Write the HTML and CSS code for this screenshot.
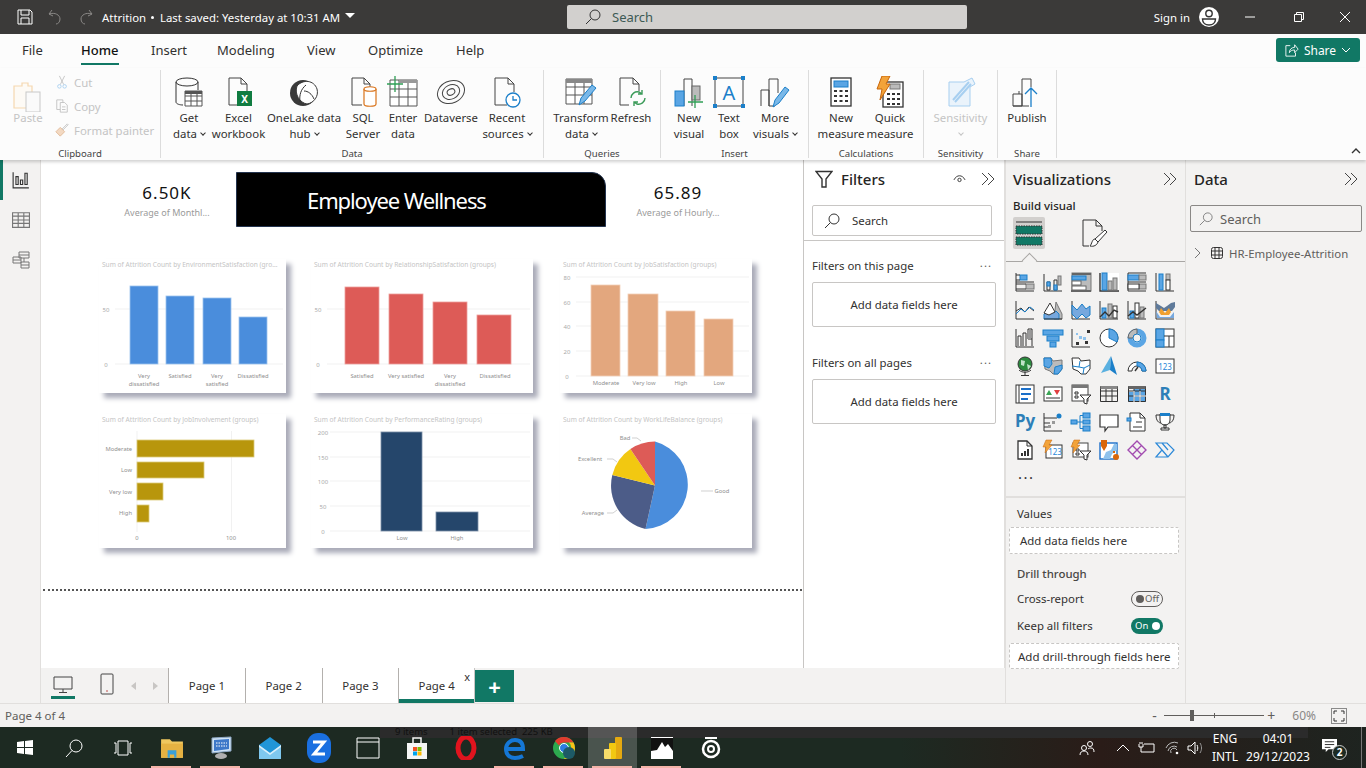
FILE: index.html
```html
<!DOCTYPE html>
<html lang="en">

<head>
    <meta charset="UTF-8">
    <title>Attrition - Power BI Desktop</title>
    <link rel="stylesheet" href="styles.css">
</head>

<body>
    <!-- title bar -->
    <div class="titlebar">
        <svg class="tb-save" viewBox="0 0 16 16"><path class="w1" d="M1 1h12l2 2v12H1zM4 1v5h8V1M4 15v-6h8v6"/></svg>
        <svg class="tb-undo" viewBox="0 0 16 16"><path class="d1" d="M5 1L2 5l4 2M2 5c6-2 11 1 11 5 0 3-2 5-4 5"/></svg>
        <svg class="tb-redo" viewBox="0 0 16 16"><path class="d1" d="M11 1l3 4-4 2M14 5C8 3 3 6 3 10c0 3 2 5 4 5"/></svg>
        <span class="tb-name">Attrition</span>
        <span class="tb-dot"></span>
        <span class="tb-saved">Last saved: Yesterday at 10:31 AM</span>
        <span class="tb-caret"></span>
        <div class="tb-search">
            <svg class="ic16" viewBox="0 0 16 16"><circle class="k1" cx="10" cy="6" r="5"/><path class="k1" d="M6.500 9.500L1 15"/></svg>
            <span>Search</span>
        </div>
        <span class="tb-sign">Sign in</span>
        <svg class="tb-user" viewBox="0 0 20 20"><circle cx="10" cy="10" r="10" fill="#fff"/><circle class="k2" cx="10" cy="6.500" r="3.200"/><path class="k2" d="M3.500 12h13c0 4-3 6-6.500 6s-6.500-2-6.500-6z"/></svg>
        <svg class="tb-min" viewBox="0 0 10 10"><path class="w1" d="M0 5h10"/></svg>
        <svg class="tb-max" viewBox="0 0 10 10"><path class="w1" d="M0.500 2.500h7v7h-7zM2.500 2.500v-2h7v7h-2"/></svg>
        <svg class="tb-close" viewBox="0 0 12 12"><path class="w1" d="M1 1l10 10M11 1L1 11"/></svg>
    </div>

    <!-- ribbon tabs -->
    <div class="tabs">
        <span class="tab t-file">File</span>
        <span class="tab t-home">Home</span>
        <span class="tab t-insert">Insert</span>
        <span class="tab t-model">Modeling</span>
        <span class="tab t-view">View</span>
        <span class="tab t-opt">Optimize</span>
        <span class="tab t-help">Help</span>
        <div class="share">
            <svg class="ic14" viewBox="0 0 16 16"><path class="w1" d="M6 3H1v12h11v-4M5 11c0-4 3-6 6-6V2l4 5-4 4V8c-3 0-5 1-6 3z"/></svg>
            <span>Share</span>
            <svg class="ic10" viewBox="0 0 10 10"><path class="w1" d="M1 3l4 4 4-4"/></svg>
        </div>
    </div>

    <!-- ribbon -->
    <div class="ribbon">
        <div class="group g-clip">
            <div class="clip-row">
                <div class="paste">
                    <svg class="ic32" viewBox="0 0 32 32"><path class="or" d="M2 6h8V3h6v3h4v22H2z"/><rect x="14" y="12" width="14" height="20" fill="#fafafa" stroke="#c8c8c8"/></svg>
                    <span>Paste</span>
                </div>
                <div class="clip-list">
                    <div class="clip-item">
                        <svg class="ic14" viewBox="0 0 14 16"><path class="dg" d="M4 1l5 10M10 1L5 11"/><circle class="bl" cx="4" cy="13" r="2"/><circle class="bl" cx="10" cy="13" r="2"/></svg>
                        <span>Cut</span>
                    </div>
                    <div class="clip-item">
                        <svg class="ic14" viewBox="0 0 14 16"><path class="dg" d="M1 1h7v3M1 1v11h4M5 4h5l3 3v8H5zM7 9h4M7 12h4"/></svg>
                        <span>Copy</span>
                    </div>
                    <div class="clip-item">
                        <svg class="ic14" viewBox="0 0 16 16"><path d="M1 10l5-5 5 5-5 5z" fill="#f3d9c2" stroke="#e0b896"/><path class="dg" d="M8 7l6-6 1 1-6 6"/></svg>
                        <span>Format painter</span>
                    </div>
                </div>
            </div>
            <div class="group-label">Clipboard</div>
        </div>

        <div class="group g-data">
            <div class="btns">
                <div class="btn w44">
                    <svg class="ic32" viewBox="0 0 32 32"><path class="k1" d="M3 6v20c0 2 4 3 7 3M25 6v8"/><ellipse class="k1" cx="14" cy="6" rx="11" ry="4"/><path class="tb" d="M12 15h17v15H12zM12 20h17M12 25h17M18 15v15M24 15v15"/><rect x="12" y="15" width="17" height="3" fill="#555"/></svg>
                    <span>Get<br>data <i class="chev"></i></span>
                </div>
                <div class="btn w55">
                    <svg class="ic32" viewBox="0 0 32 32"><path class="dk" d="M6 2h12l6 6v16M6 2v27h8M18 2v6h6"/><rect x="14" y="15" width="15" height="15" fill="#107c41"/><text class="xl" x="21.500" y="27">X</text></svg>
                    <span>Excel<br>workbook</span>
                </div>
                <div class="btn w76">
                    <svg class="ic32" viewBox="0 0 32 32"><circle cx="15" cy="17" r="13" fill="#3a3a3a"/><path d="M9 10c6-7 17-6 20 3 2 7-3 14-10 15-7-1-13-10-10-18z" fill="#fff" stroke="#3a3a3a"/><path class="k1" d="M12 26c-1-7 1-13 6-17M16 15c4 0 8 3 10 8"/></svg>
                    <span>OneLake data<br>hub <i class="chev"></i></span>
                </div>
                <div class="btn w42">
                    <svg class="ic32" viewBox="0 0 32 32"><path class="dk" d="M5 2h12l6 6v4M5 2v27h10M17 2v6h6"/><path class="orl" d="M17 13c0-3 12-3 12 0v15c0 3-12 3-12 0z"/><path class="orl" d="M17 13c0 3 12 3 12 0"/></svg>
                    <span>SQL<br>Server</span>
                </div>
                <div class="btn w38">
                    <svg class="ic32" viewBox="0 0 32 32"><path class="tb" d="M3 4h27v26H3zM3 13h27M3 21h27M12 4v26M21 4v26"/><rect x="12" y="4" width="18" height="3" fill="#999"/><path class="gr" d="M8 0v16M0 8h16"/></svg>
                    <span>Enter<br>data</span>
                </div>
                <div class="btn w58">
                    <svg class="ic32" viewBox="0 0 32 32"><ellipse class="dk" cx="16" cy="16" rx="14" ry="11" transform="rotate(-25 16 16)"/><ellipse class="dk" cx="16" cy="16" rx="9" ry="7" transform="rotate(-25 16 16)"/><ellipse class="dk" cx="16" cy="16" rx="4" ry="3" transform="rotate(-25 16 16)"/></svg>
                    <span>Dataverse</span>
                </div>
                <div class="btn w54">
                    <svg class="ic32" viewBox="0 0 32 32"><path class="dk" d="M4 2h13l6 6v8M4 2v27h12M17 2v6h6"/><circle cx="22" cy="24" r="7" fill="#fff" stroke="#1b7fc9" stroke-width="1.300"/><path class="blu" d="M22 20v4h4"/></svg>
                    <span>Recent<br>sources <i class="chev"></i></span>
                </div>
            </div>
            <div class="group-label">Data</div>
        </div>

        <div class="group g-query">
            <div class="btns">
                <div class="btn w54">
                    <svg class="ic32" viewBox="0 0 32 32"><path class="tb" d="M1 3h26v25H1zM1 11h26M1 19h26M10 3v25M19 3v25"/><rect x="1" y="3" width="26" height="4" fill="#888"/><path d="M14 29l2-7L27 9l4 3-11 13z" fill="#7ab8e8" stroke="#1b7fc9"/></svg>
                    <span>Transform<br>data <i class="chev"></i></span>
                </div>
                <div class="btn w46">
                    <svg class="ic32" viewBox="0 0 32 32"><path class="dk" d="M5 2h13l6 6v7M5 2v27h9M18 2v6h6"/><path class="grn" d="M16 22c0-4 4-7 8-6l3 2M30 22c0 4-4 7-8 6l-3-2M27 14v4h-4M19 30v-4h4"/></svg>
                    <span>Refresh</span>
                </div>
            </div>
            <div class="group-label">Queries</div>
        </div>

        <div class="group g-insert">
            <div class="btns">
                <div class="btn w40">
                    <svg class="ic32" viewBox="0 0 32 32"><path class="dk" d="M11 30V3h8v27"/><rect x="2" y="15" width="9" height="15" fill="#5aa5e4" stroke="#1b7fc9"/><rect x="19" y="10" width="8" height="14" fill="#bbb" stroke="#666"/><path class="gr" d="M22 19v14M15 26h15"/></svg>
                    <span>New<br>visual</span>
                </div>
                <div class="btn w40">
                    <svg class="ic32" viewBox="0 0 32 32"><rect class="dk" x="2" y="2" width="28" height="28"/><g class="hnd"><rect x="0" y="0" width="4" height="4"/><rect x="28" y="0" width="4" height="4"/><rect x="0" y="28" width="4" height="4"/><rect x="28" y="28" width="4" height="4"/></g><text class="tb-a" x="16" y="24">A</text></svg>
                    <span>Text<br>box</span>
                </div>
                <div class="btn w52">
                    <svg class="ic32" viewBox="0 0 32 32"><path class="dk" d="M2 30V14h8v16M10 30V3h9v14M10 30h6"/><path d="M14 31l2-7L26 11l4 3-10 13z" fill="#7ab8e8" stroke="#1b7fc9"/></svg>
                    <span>More<br>visuals <i class="chev"></i></span>
                </div>
            </div>
            <div class="group-label">Insert</div>
        </div>

        <div class="group g-calc">
            <div class="btns">
                <div class="btn w50">
                    <svg class="ic32" viewBox="0 0 32 32"><rect class="dk2" x="6" y="2" width="20" height="28"/><rect x="9" y="5" width="14" height="6" fill="#5aa5e4" stroke="#1b7fc9"/><path class="dots" d="M9 15h3M14.500 15h3M20 15h3M9 20h3M14.500 20h3M20 20h3M9 25h3M14.500 25h3M20 25h3"/></svg>
                    <span>New<br>measure</span>
                </div>
                <div class="btn w48">
                    <svg class="ic32" viewBox="0 0 32 32"><rect class="dk2" x="9" y="6" width="20" height="25"/><rect x="16" y="8" width="10" height="5" fill="#bbb" stroke="#777"/><path class="dots" d="M13 18h3M18 18h3M23 18h3M13 23h3M18 23h3M23 23h3M13 28h3M18 28h3M23 28h3"/><path d="M8 0h8l-4 8h4L6 24l2-11H3z" fill="#f2a33a" stroke="#c8660a"/></svg>
                    <span>Quick<br>measure</span>
                </div>
            </div>
            <div class="group-label">Calculations</div>
        </div>

        <div class="group g-sens">
            <div class="btns">
                <div class="btn w73 off">
                    <svg class="ic32" viewBox="0 0 32 32"><path d="M4 6h15l8-4 3 6-5 3v19H4z" fill="#eaf3fb" stroke="#a7cff0"/><path d="M8 24L24 6M10 26L26 8" stroke="#a7cff0" stroke-width="2"/></svg>
                    <span>Sensitivity<br><i class="chev"></i></span>
                </div>
            </div>
            <div class="group-label">Sensitivity</div>
        </div>

        <div class="group g-share">
            <div class="btns">
                <div class="btn w58">
                    <svg class="ic32" viewBox="0 0 32 32"><path class="dk" d="M2 30V18h9v12zM11 30V3h9v8M8 18v-3M2 30h16"/><path class="blu" d="M20 31V12M14 18l6-6 6 6"/></svg>
                    <span>Publish</span>
                </div>
            </div>
            <div class="group-label">Share</div>
        </div>
        <svg class="collapse" viewBox="0 0 10 10"><path class="k2" d="M1 7l4-4 4 4"/></svg>
    </div>

    <!-- main area -->
    <div class="main">
        <div class="rail">
            <div class="rail-item active">
                <svg class="ic18" viewBox="0 0 16 16"><path class="k1" d="M1 1v14h14M3.500 12V5h2v7zM7.500 12V8h2v4zM11.500 12V2h2v10z"/></svg>
            </div>
            <div class="rail-item">
                <svg class="ic18" viewBox="0 0 16 16"><path class="gy" d="M0.500 1.500h15v13h-15zM0.500 4.500h15M0.500 8h15M0.500 11h15M5.500 1.500v13M10.500 1.500v13"/></svg>
            </div>
            <div class="rail-item">
                <svg class="ic18" viewBox="0 0 18 18"><path class="gy" d="M7 1h10v6H7zM7 4h10M1 6h8v6H1zM1 9h8M9 11h8v6H9zM9 14h8M12 7v4"/></svg>
            </div>
        </div>

        <div class="center">
            <div class="work">
                <div class="canvas">
                    <div class="kpi-row">
                        <div class="kpi kpi-a">
                            <div class="kpi-num">6.50K</div>
                            <div class="kpi-lbl">Average of Monthl...</div>
                        </div>
                        <div class="banner">Employee Wellness</div>
                        <div class="kpi kpi-b">
                            <div class="kpi-num">65.89</div>
                            <div class="kpi-lbl">Average of Hourly...</div>
                        </div>
                    </div>

                    <div class="chart-grid">
                        <div class="card card-a">
                            <svg class="chart" viewBox="0 0 187 134">
                                <text class="c-title" x="3" y="8">Sum of Attrition Count by EnvironmentSatisfaction (gro...</text>
                                <path class="c-grid" d="M16 50h168M16 105h168"/>
                                <text class="c-ax" x="7" y="53">50</text><text class="c-ax" x="7" y="108">0</text>
                                <g fill="#4a8ddc" stroke="#9cc3ee" stroke-width="0.800">
                                    <rect x="31" y="27" width="28" height="78"/><rect x="67" y="37" width="28" height="68"/><rect x="104" y="39" width="28" height="66"/><rect x="140" y="58" width="28" height="47"/>
                                </g>
                                <text class="c-lb" x="45" y="119">Very</text><text class="c-lb" x="45" y="127">dissatisfied</text>
                                <text class="c-lb" x="81" y="119">Satisfied</text>
                                <text class="c-lb" x="118" y="119">Very</text><text class="c-lb" x="118" y="127">satisfied</text>
                                <text class="c-lb" x="154" y="119">Dissatisfied</text>
                            </svg>
                        </div>
                        <div class="card card-b">
                            <svg class="chart" viewBox="0 0 222 134">
                                <text class="c-title" x="3" y="8">Sum of Attrition Count by RelationshipSatisfaction (groups)</text>
                                <path class="c-grid" d="M16 50h203M16 105h203"/>
                                <text class="c-ax" x="7" y="53">50</text><text class="c-ax" x="7" y="108">0</text>
                                <g fill="#dd5b57" stroke="#ee9e9b" stroke-width="0.800">
                                    <rect x="34" y="28" width="34" height="77"/><rect x="78" y="35" width="34" height="70"/><rect x="122" y="43" width="34" height="62"/><rect x="166" y="56" width="34" height="49"/>
                                </g>
                                <text class="c-lb" x="51" y="119">Satisfied</text>
                                <text class="c-lb" x="95" y="119">Very satisfied</text>
                                <text class="c-lb" x="139" y="119">Very</text><text class="c-lb" x="139" y="127">dissatisfied</text>
                                <text class="c-lb" x="184" y="119">Dissatisfied</text>
                            </svg>
                        </div>
                        <div class="card card-c">
                            <svg class="chart" viewBox="0 0 192 134">
                                <text class="c-title" x="3" y="8">Sum of Attrition Count by JobSatisfaction (groups)</text>
                                <path class="c-grid" d="M16 18h173M16 43h173M16 67h173M16 92h173M16 117h173"/>
                                <text class="c-ax" x="7" y="21">80</text><text class="c-ax" x="7" y="46">60</text><text class="c-ax" x="7" y="70">40</text><text class="c-ax" x="7" y="95">20</text><text class="c-ax" x="7" y="120">0</text>
                                <g fill="#e3a77e" stroke="#f2d0b8" stroke-width="0.800">
                                    <rect x="31" y="26" width="29" height="91"/><rect x="68" y="35" width="30" height="82"/><rect x="106" y="52" width="29" height="65"/><rect x="144" y="60" width="29" height="57"/>
                                </g>
                                <text class="c-lb" x="46" y="126">Moderate</text><text class="c-lb" x="84" y="126">Very low</text><text class="c-lb" x="121" y="126">High</text><text class="c-lb" x="159" y="126">Low</text>
                            </svg>
                        </div>
                        <div class="card card-a">
                            <svg class="chart" viewBox="0 0 187 134">
                                <text class="c-title" x="3" y="8">Sum of Attrition Count by JobInvolvement (groups)</text>
                                <path class="c-grid" d="M38 17v101M132.500 17v101"/>
                                <g fill="#b8960c" stroke="#dccb7a" stroke-width="0.800">
                                    <rect x="38" y="26" width="117" height="17"/><rect x="38" y="48" width="67" height="16"/><rect x="38" y="69" width="26" height="17"/><rect x="38" y="91" width="12" height="17"/>
                                </g>
                                <text class="c-lr" x="33" y="37">Moderate</text><text class="c-lr" x="33" y="58">Low</text><text class="c-lr" x="33" y="80">Very low</text><text class="c-lr" x="33" y="101">High</text>
                                <text class="c-lb" x="38" y="126">0</text><text class="c-lb" x="132" y="126">100</text>
                            </svg>
                        </div>
                        <div class="card card-b">
                            <svg class="chart" viewBox="0 0 222 134">
                                <text class="c-title" x="3" y="8">Sum of Attrition Count by PerformanceRating (groups)</text>
                                <path class="c-grid" d="M19 18h200M19 43h200M19 67h200M19 92h200M19 117h200"/>
                                <text class="c-ax" x="12" y="21">200</text><text class="c-ax" x="12" y="46">150</text><text class="c-ax" x="12" y="70">100</text><text class="c-ax" x="12" y="95">50</text><text class="c-ax" x="12" y="120">0</text>
                                <g fill="#25466b" stroke="#7c90a8" stroke-width="0.800">
                                    <rect x="70" y="18" width="41" height="99"/><rect x="125" y="98" width="42" height="19"/>
                                </g>
                                <text class="c-lb" x="91" y="126">Low</text><text class="c-lb" x="146" y="126">High</text>
                            </svg>
                        </div>
                        <div class="card card-c">
                            <svg class="chart" viewBox="0 0 192 134">
                                <text class="c-title" x="3" y="8">Sum of Attrition Count by WorkLifeBalance (groups)</text>
                                <path fill="#4a8ddc" d="M95 71.500V27.500A44 44.500 0 0 1 85.500 115z"/>
                                <path fill="#4c5c88" d="M95 71.500L85.500 115A44 44.500 0 0 1 52.300 61z"/>
                                <path fill="#f2c811" d="M95 71.500L52.300 61A44 44.500 0 0 1 70.400 35z"/>
                                <path fill="#dd5b57" d="M95 71.500L70.400 35A44 44.500 0 0 1 95 27.500z"/>
                                <path class="c-lead" d="M141 77h12M47 99h6l4-3M47 45h6l4 3M72 24h5l4 3"/>
                                <text class="c-lb" x="162" y="79">Good</text><text class="c-lb" x="33" y="101">Average</text><text class="c-lb" x="30" y="47">Excellent</text><text class="c-lb" x="65" y="26">Bad</text>
                            </svg>
                        </div>
                    </div>
                    <div class="dotline"></div>
                </div>

                <!-- filters pane -->
                <div class="filters">
                    <div class="pane-head">
                        <svg class="f-icon" viewBox="0 0 18 18"><path class="k2" d="M1 1.500h16l-6 7.500v8h-4V9z"/></svg>
                        <span class="pane-title">Filters</span>
                        <svg class="f-eye" viewBox="0 0 14 10"><path class="k1" d="M1 6c3-6 9-6 12 0"/><circle cx="7" cy="6" r="1.800" class="k1"/></svg>
                        <svg class="chevs" viewBox="0 0 14 14"><path class="dk" d="M1 1l6 6-6 6M7 1l6 6-6 6"/></svg>
                    </div>
                    <div class="f-search">
                        <svg class="ic16" viewBox="0 0 16 16"><circle class="k1" cx="10" cy="6" r="5"/><path class="k1" d="M6.500 9.500L1 15"/></svg>
                        <span>Search</span>
                    </div>
                    <div class="f-sec">
                        <div class="f-sec-head"><span>Filters on this page</span><b class="more">...</b></div>
                        <div class="f-box">Add data fields here</div>
                    </div>
                    <div class="f-sec f-sec2">
                        <div class="f-sec-head"><span>Filters on all pages</span><b class="more">...</b></div>
                        <div class="f-box">Add data fields here</div>
                    </div>
                </div>
            </div>

            <!-- page tabs -->
            <div class="pagebar">
                <div class="view-btn on">
                    <svg class="ic20" viewBox="0 0 20 18"><path class="dk" d="M1 1h18v12H1z"/><path class="dk" d="M10 13v3M6 16.500h8"/></svg>
                </div>
                <div class="view-btn">
                    <svg class="ic20" viewBox="0 0 14 22"><rect class="dk" x="1" y="1" width="12" height="20" rx="1"/><path d="M6 18h2" stroke="#c0504d"/></svg>
                </div>
                <div class="arrows"><i class="arr-l"></i><i class="arr-r"></i></div>
                <div class="page-tab">Page 1</div>
                <div class="page-tab">Page 2</div>
                <div class="page-tab">Page 3</div>
                <div class="page-tab current">Page 4<span class="tab-x">x</span></div>
                <div class="page-add">+</div>
            </div>
        </div>

        <!-- visualizations pane -->
        <div class="viz">
            <div class="viz-head">
                <span class="pane-title">Visualizations</span>
                <svg class="chevs" viewBox="0 0 14 14"><path class="dk" d="M1 1l6 6-6 6M7 1l6 6-6 6"/></svg>
            </div>
            <div class="viz-sub">Build visual</div>
            <div class="viz-modes">
                <div class="mode-on">
                    <svg class="ic28" viewBox="0 0 28 28"><path class="k1" d="M1 3h26"/><rect x="1" y="7" width="26" height="8" fill="#117865" stroke="#333" stroke-dasharray="1.500 1"/><rect x="1" y="18" width="26" height="8" fill="#117865" stroke="#333" stroke-dasharray="1.500 1"/></svg>
                </div>
                <svg class="mode-off" viewBox="0 0 26 28"><path class="k1" d="M1 27V1h13l6 6v5M14 1v6h6M1 27h6"/><path d="M8 27c4 1 7-1 8-4l9-10-2-2-10 9c-3 0-3 5-5 7z" fill="#fff" stroke="#333"/><path class="k1" d="M13 20l3 3"/></svg>
            </div>
            <div class="viz-line"><i class="viz-tip"></i></div>

            <div class="viz-grid">
                <svg viewBox="0 0 20 20"><path class="k1" d="M1 1v18h18M1 10h18"/><rect class="b" x="5" y="3" width="7" height="5"/><rect class="g" x="11" y="12" width="8" height="5"/><path class="k1" d="M1 3h4M1 8h4M1 12h10M1 17h10"/></svg>
                <svg viewBox="0 0 20 20"><path class="k1" d="M1 2v17h18M4 18V10h3v8zM11 18V8h3v10z"/><rect class="b" x="4" y="10" width="3" height="4"/><rect class="b" x="11" y="13" width="3" height="5"/><rect class="g" x="15" y="4" width="3" height="9"/></svg>
                <svg viewBox="0 0 20 20"><rect class="g" x="1" y="1" width="19" height="18"/><rect x="1" y="1" width="19" height="2" fill="#666"/><rect class="b" x="1" y="4" width="14" height="4"/><rect fill="#fff" stroke="#666" x="1" y="9" width="9" height="4"/><rect fill="#fff" stroke="#666" x="1" y="14" width="14" height="4"/><rect x="0" y="18" width="20" height="2" fill="#666"/></svg>
                <svg viewBox="0 0 20 20"><rect fill="#fff" x="1" y="1" width="19" height="18"/><path class="k2" d="M1 1v18h19"/><rect class="b" x="3" y="1" width="5" height="17"/><rect class="g" x="9" y="9" width="4" height="9"/><rect class="g" x="14" y="6" width="4" height="12"/></svg>
                <svg viewBox="0 0 20 20"><path class="k1" d="M1 1v18h18M1 10h18M1 1h18"/><rect class="b" x="1" y="3" width="11" height="5"/><rect class="g" x="12" y="12" width="7" height="5"/><rect class="g" x="12" y="3" width="7" height="5"/><rect fill="#fff" stroke="#333" x="1" y="12" width="11" height="5"/></svg>
                <svg viewBox="0 0 20 20"><path class="k1" d="M1 1v18h18"/><rect class="b" x="4" y="2" width="4" height="16"/><rect class="g" x="11" y="2" width="4" height="6"/><rect fill="#fff" stroke="#333" x="11" y="8" width="4" height="10"/></svg>

                <svg viewBox="0 0 20 20"><path class="k1" d="M1 1v18h18"/><path class="k1" d="M1 11l5-3 4 4 4-5 5 4"/><path class="bl2" d="M1 14l5-5 4 3 5-5 4 3"/></svg>
                <svg viewBox="0 0 20 20"><path class="g" d="M13 2l6 12v5h-8z"/><path class="bf" d="M1 19v-5l5-5 4 4 3-2 3 3v5z"/><path class="w0" d="M1 13l6-10 5 9-6 3z"/><path class="k1" d="M1 19h18"/></svg>
                <svg viewBox="0 0 20 20"><path class="k1" d="M1 1v18h18"/><path class="bf" d="M1 5l5 5 5-6 4 5 4-3v9l-4 3-4-4-5 5-5-5z"/></svg>
                <svg viewBox="0 0 20 20"><path class="k1" d="M1 1v18h18"/><rect class="b" x="3" y="8" width="4" height="10"/><rect class="g" x="9" y="4" width="4" height="14"/><rect class="w0" x="14" y="6" width="4" height="12"/><path class="k2" d="M1 17l5-5 4 4 5-6 4 2"/></svg>
                <svg viewBox="0 0 20 20"><path class="k1" d="M1 1v18h18"/><rect class="b" x="3" y="11" width="4" height="7"/><rect class="w0" x="8" y="3" width="4" height="15"/><rect class="g" x="13" y="7" width="4" height="11"/><path class="k2" d="M1 16l5-4 4 3 9-7"/></svg>
                <svg viewBox="0 0 20 20"><path class="k1" d="M1 1v18h18"/><path d="M1 3l5 3 3 2 3-2 4-3 4-1v5l-3 4H4L1 8z" fill="#5f7a9a"/><path d="M6 8l4 5 4-5 2 4-2 3H6L4 12z" fill="#f0a030"/><path d="M1 11l4 6h10l4-5v6H2z" fill="#77a8de"/></svg>

                <svg viewBox="0 0 20 20"><path class="k1" d="M1 1v18h18M3 18V8h3v10M8 18V5h3v13M13 11V1h4v10M13 11h4M17 11v7"/><rect x="13" y="2" width="3" height="9" fill="#999"/></svg>
                <svg viewBox="0 0 20 20"><rect class="b" x="0" y="2" width="20" height="5"/><rect class="b" x="4" y="8" width="12" height="5"/><rect class="b" x="7" y="14" width="6" height="5"/></svg>
                <svg viewBox="0 0 20 20"><path class="k1" d="M1 1v18h18"/><rect x="16" y="2" width="3" height="3" fill="#333"/><rect x="5" y="14" width="3" height="3" fill="#333"/><rect x="14" y="13" width="3" height="3" fill="#333"/><rect x="8" y="8" width="3" height="3" fill="#8fc2ec"/><rect x="12" y="9" width="3" height="3" fill="#8fc2ec"/><rect x="5" y="5" width="2" height="2" fill="#8fc2ec"/></svg>
                <svg viewBox="0 0 20 20"><circle cx="10" cy="10" r="9" fill="#fff" stroke="#333"/><path class="b" d="M10 10V1a9 9 0 0 1 8 13z"/></svg>
                <svg viewBox="0 0 20 20"><circle cx="10" cy="10" r="7" fill="none" stroke="#5aa5e4" stroke-width="5"/><path d="M1 10a9 9 0 0 1 9-9v5a4 4 0 0 0-4 4z" fill="#bbb" stroke="#666"/><circle cx="10" cy="10" r="4" fill="#f3f2f1" stroke="#1b7fc9"/></svg>
                <svg viewBox="0 0 20 20"><rect fill="#fff" stroke="#333" x="1" y="1" width="18" height="18"/><rect class="b" x="1" y="1" width="8" height="11"/><rect class="b" x="1" y="12" width="8" height="7"/><path class="k1" d="M9 8h10M14 8v11"/></svg>

                <svg viewBox="0 0 20 20"><circle cx="10" cy="8" r="7" fill="#2b8a3e" stroke="#333"/><path d="M6 4l4 1-1 5-3-1zM12 8l4 2-3 4z" fill="#bfe3c8"/><path class="k1" d="M4 14c3 3 9 3 12 0M10 16v3M6 19.500h8"/></svg>
                <svg viewBox="0 0 20 20"><path class="g" d="M1 2h7l2 3 9-1v9l-4 5h-5l-3-3-5-2z"/><path class="b" d="M1 2h7l1 6-3 4-5-2zM12 11l7-2v4l-4 5h-4z"/></svg>
                <svg viewBox="0 0 20 20"><path fill="#fff" stroke="#333" d="M1 2h7l2 3 9-1v9l-4 5h-5l-3-3-5-2z"/><path class="bl2" d="M9 5L8 11l-7-1M8 11l5 1 6-3M13 12l-1 6"/></svg>
                <svg viewBox="0 0 20 20"><path d="M12 0L2 17l9-3z" fill="#5ab0e0"/><path d="M12 0l-1 14 7 5z" fill="#1b7fc9"/></svg>
                <svg viewBox="0 0 20 20"><path d="M1 15a9 9 0 0 1 18 0h-4a5 5 0 0 0-10 0z" fill="#fff" stroke="#333"/><path d="M10 6a9 9 0 0 1 9 9h-4a5 5 0 0 0-5-5z" fill="#5aa5e4" stroke="#1b7fc9"/><path class="k2" d="M8 15l3-4"/></svg>
                <svg viewBox="0 0 20 20"><rect fill="#fff" stroke="#333" x="1" y="3" width="18" height="14"/><text class="num" x="10" y="14">123</text></svg>

                <svg viewBox="0 0 20 20"><rect fill="#fff" stroke="#333" x="1" y="1" width="18" height="18"/><path class="k1" d="M4 1v18"/><path d="M6 5h10M6 10h10M6 15h7" stroke="#1b6fc9" stroke-width="2"/></svg>
                <svg viewBox="0 0 20 20"><rect fill="#fff" stroke="#333" x="1" y="3" width="18" height="14"/><path fill="#3aa655" d="M6 6l3 5H3z"/><path fill="#e04040" d="M14 11l3-5h-6z"/><path d="M3 14h14" stroke="#333"/></svg>
                <svg viewBox="0 0 20 20"><rect fill="#fff" stroke="#444" x="1" y="1" width="16" height="16"/><rect x="1" y="1" width="16" height="3" fill="#777"/><path class="k1" d="M4 8h3v2H4zM4 12h3v2H4z"/><path fill="#fff" stroke="#333" d="M9 11h11l-4 4v5l-3-1v-4z"/></svg>
                <svg viewBox="0 0 20 20"><path class="k1" d="M1.500 2.500h17v15h-17zM1.500 7h17M1.500 12h17M7 2.500v15M13 2.500v15"/><rect x="1.500" y="2" width="17" height="3" fill="#888"/></svg>
                <svg viewBox="0 0 20 20"><rect x="1" y="8" width="18" height="10" fill="#5aa5e4"/><rect x="7" y="3" width="12" height="5" fill="#5aa5e4"/><path class="k1" d="M1.500 2.500h17v15h-17zM1.500 7h17M1.500 12h17M7 2.500v15M13 2.500v15"/><rect x="1.500" y="2" width="17" height="3" fill="#666"/><path stroke="#fff" d="M7 7v11M13 7v11M7 12h12"/></svg>
                <svg viewBox="0 0 20 20"><text class="big-r" x="10" y="16">R</text></svg>

                <svg viewBox="0 0 20 20" class="py-wide"><text class="big-py" x="0" y="15">Py</text></svg>
                <svg viewBox="0 0 20 20"><path class="k1" d="M1 1v18h18M1 6h13M1 11h6M1 15h4"/><circle cx="16" cy="4" r="2.500" fill="#1b7fc9"/><rect x="9" y="9" width="3" height="3" fill="#999"/><rect x="5" y="13" width="3" height="3" fill="#999"/></svg>
                <svg viewBox="0 0 20 20"><rect class="b" x="0" y="8" width="6" height="4"/><rect class="b" x="12" y="1" width="7" height="5"/><rect class="b" x="12" y="8" width="7" height="4"/><rect class="b" x="12" y="14" width="7" height="5"/><path class="bl2" d="M6 10h6M9 3.500h3M9 16.500h3M9 3.500v13"/></svg>
                <svg viewBox="0 0 20 20"><path fill="#fff" stroke="#333" stroke-width="1.200" d="M1 3h18v12H9l-3 4v-4H1z"/></svg>
                <svg viewBox="0 0 20 20"><path fill="#fff" stroke="#333" d="M3 1h10l5 5v13H3z"/><path class="k1" d="M13 1v5h5M9 10h6M6 15h9"/><rect class="b" x="0" y="6" width="4" height="3"/></svg>
                <svg viewBox="0 0 20 20"><path class="k1" d="M1 3h18c0 6-3 8-5 8M1 3c0 6 3 8 5 8"/><path fill="#fff" stroke="#333" d="M5 2h10v6c0 3-2 5-5 5s-5-2-5-5zM9 13h2v3H9zM6 16h8v2H6z"/><rect x="5" y="1" width="10" height="3" fill="#1b7fc9"/></svg>

                <svg viewBox="0 0 20 20"><path fill="#fff" stroke="#333" stroke-width="1.300" d="M3 1h9l5 5v13H3z"/><path class="k1" d="M12 1v5h5"/><path stroke="#333" stroke-width="2" d="M7 16v-3M10 16v-5M13 16V9"/></svg>
                <svg viewBox="0 0 20 20"><rect fill="#fff" stroke="#333" x="3" y="5" width="16" height="13"/><text class="num" x="12" y="15">123</text><path d="M3 0h6l-3 5h3L2 13l1-6H0z" fill="#f2a33a" stroke="#c8660a" stroke-width="0.500"/></svg>
                <svg viewBox="0 0 20 20"><rect fill="#fff" stroke="#444" x="2" y="3" width="15" height="14"/><path class="k1" d="M5 9h3v2H5zM5 13h3v2H5z"/><path fill="#fff" stroke="#333" d="M9 11h11l-4 4v5l-3-1v-4z"/><path d="M3 0h6l-3 5h3L2 13l1-6H0z" fill="#f2a33a" stroke="#c8660a" stroke-width="0.500"/></svg>
                <svg viewBox="0 0 20 20"><rect x="1" y="3" width="17" height="16" fill="#fff" stroke="#1b6fc9" stroke-width="1.400"/><path d="M4 19l3-7 5-2 3-6h3v6l-5 4-2 5z" fill="#8fc2ec"/><path d="M2 0h6v6l-3 5-3-5z" fill="#d9660a"/><circle cx="17" cy="17" r="3" fill="#d9660a"/><rect x="14" y="11" width="2" height="2" fill="#d9660a"/></svg>
                <svg viewBox="0 0 20 20"><path fill="none" stroke="#a24bb0" stroke-width="1.400" d="M10 1l9 9-9 9-9-9zM5.500 5.500l9 9M14.500 5.500l-9 9"/></svg>
                <svg viewBox="0 0 20 20"><path fill="none" stroke="#2b88d8" stroke-width="1.200" d="M1 3h11l7 7-6 7H1l6-7zM7 10l6 7M7 3l6 7"/></svg>
            </div>
            <div class="viz-more">...</div>

            <div class="viz-values">
                <div class="v-label">Values</div>
                <div class="d-box d-a">Add data fields here</div>
                <div class="v-drill">Drill through</div>
                <div class="t-row"><span>Cross-report</span><span class="tgl tgl-off"><i></i>Off</span></div>
                <div class="t-row"><span>Keep all filters</span><span class="tgl tgl-on">On<i></i></span></div>
                <div class="d-box d-b">Add drill-through fields here</div>
            </div>
        </div>

        <!-- data pane -->
        <div class="data">
            <div class="viz-head data-head">
                <span class="pane-title">Data</span>
                <svg class="chevs" viewBox="0 0 14 14"><path class="dk" d="M1 1l6 6-6 6M7 1l6 6-6 6"/></svg>
            </div>
            <div class="d-search">
                <svg class="ic14" viewBox="0 0 16 16"><circle class="gy" cx="10" cy="6" r="5"/><path class="gy" d="M6.500 9.500L1 15"/></svg>
                <span>Search</span>
            </div>
            <div class="tree">
                <svg class="tree-chev" viewBox="0 0 8 12"><path class="gy" d="M1 1l5 5-5 5"/></svg>
                <svg class="ic12" viewBox="0 0 12 12"><rect class="k1" x="0.500" y="0.500" width="11" height="11" rx="2"/><path class="k1" d="M0.500 4h11M0.500 8h11M4 0.500v11M8 0.500v11"/></svg>
                <span>HR-Employee-Attrition</span>
            </div>
        </div>
    </div>

    <!-- status bar -->
    <div class="status">
        <span>Page 4 of 4</span>
        <div class="zoom">
            <span class="z-sym">-</span>
            <div class="z-track"><i class="z-mid"></i><i class="z-knob"></i></div>
            <span class="z-sym">+</span>
            <span class="z-pct">60%</span>
            <svg class="ic16" viewBox="0 0 16 16"><rect x="0.500" y="0.500" width="15" height="15" fill="none" stroke="#8a8a8a"/><path class="k1" d="M3 6V3h3M10 3h3v3M13 10v3h-3M6 13H3v-3"/></svg>
        </div>
    </div>

    <!-- taskbar -->
    <div class="taskbar">
        <div class="behind"><span>9 items</span><span>1 item selected&nbsp; 225 KB</span></div>
        <div class="ti"><svg viewBox="0 0 20 20"><path fill="#fff" d="M2 4l7-1v6H2zM10 3l8-1v7h-8zM2 10h7v6l-7-1zM10 10h8v7l-8-1z"/></svg></div>
        <div class="ti"><svg viewBox="0 0 20 20"><circle class="w1" cx="12" cy="8" r="6"/><path class="w1" d="M8 12.500L2 19"/></svg></div>
        <div class="ti"><svg viewBox="0 0 20 20"><path class="w1" d="M5 3h10v14H5zM1 5h2v10H1M19 5h-2v10h2"/></svg></div>
        <div class="ti run"><svg viewBox="0 0 22 22"><path fill="#f0c75e" d="M1 3h8l2 2h10v15H1z"/><path fill="#e6b242" d="M1 7h20v13H1z"/><path fill="#3aa0d8" d="M7 13h8v7h-2v-3H9v3H7z"/></svg></div>
        <div class="ti run"><svg viewBox="0 0 24 24"><path fill="#cfe3f5" stroke="#8fa8c4" d="M3 2l19-1v14L3 17z"/><path fill="#3d78c9" d="M5 4l15-1v10L5 15z"/><path stroke="#fff" stroke-dasharray="1.500 1" d="M7 7h11M7 10h11"/><ellipse cx="12" cy="20" rx="6" ry="3" fill="#b0b0b0"/></svg></div>
        <div class="ti"><svg viewBox="0 0 24 24"><path fill="#2196d8" d="M1 9l11-8 11 8v14H1z"/><path fill="#7fc8ef" d="M1 9l11 8 11-8v14H1z"/><path fill="#fff" d="M1 9l11 8 11-8v2l-11 8-11-8z" opacity="0.700"/></svg></div>
        <div class="ti"><svg viewBox="0 0 24 30"><rect x="0" y="0" width="24" height="30" rx="11" fill="#1a6fe0"/><path fill="none" stroke="#fff" stroke-width="3" d="M6 9h11L7 21h11"/></svg></div>
        <div class="ti"><svg viewBox="0 0 24 24"><path class="w1" d="M1 2h22v20H1zM1 6h22"/></svg></div>
        <div class="ti"><svg viewBox="0 0 24 24"><path fill="#f5f5f5" d="M2 7h20v16H2z"/><path fill="none" stroke="#f5f5f5" stroke-width="1.500" d="M8 7V2h8v5"/><rect x="8" y="11" width="4" height="4" fill="#f25022"/><rect x="12.500" y="11" width="4" height="4" fill="#7fba00"/><rect x="8" y="15.500" width="4" height="4" fill="#00a4ef"/><rect x="12.500" y="15.500" width="4" height="4" fill="#ffb900"/></svg></div>
        <div class="ti"><svg viewBox="0 0 24 24"><ellipse cx="12" cy="12" rx="8" ry="11" fill="none" stroke="#e0141e" stroke-width="5"/></svg></div>
        <div class="ti run"><svg viewBox="0 0 24 24"><path fill="none" stroke="#1577d6" stroke-width="4" d="M4 13h16c0-6-3-9-8-9S3 8 3 13c0 6 4 9 9 9 3 0 6-1 8-2"/></svg></div>
        <div class="ti run"><svg viewBox="0 0 24 24"><circle cx="12" cy="12" r="11" fill="#2da94f"/><path fill="#e33b2e" d="M12 1a11 11 0 0 1 9.500 5.500H12a5.500 5.500 0 0 0-5 3L3 5a11 11 0 0 1 9-4z"/><path fill="#fbc116" d="M21.500 6.500A11 11 0 0 1 12 23l5-8a5.500 5.500 0 0 0 0-8.500z"/><circle cx="12" cy="12" r="4.500" fill="#2a7de1" stroke="#fff"/><circle cx="17" cy="17" r="6" fill="#1d5a66"/></svg></div>
        <div class="ti run active"><svg viewBox="0 0 24 24"><rect x="14" y="1" width="7" height="22" rx="1" fill="#e5a910"/><rect x="8" y="7" width="7" height="16" rx="1" fill="#f2c811"/><rect x="3" y="13" width="7" height="10" rx="1" fill="#f7dc6a"/></svg></div>
        <div class="ti run"><svg viewBox="0 0 24 24"><rect x="1" y="1" width="22" height="22" fill="#fff"/><path fill="#111" d="M1 2h22v13l-5-7-3 3-3-5-5 8-6 1z"/></svg></div>
        <div class="ti"><svg viewBox="0 0 24 24"><circle cx="12" cy="13" r="8" fill="none" stroke="#fff" stroke-width="2.500"/><circle cx="12" cy="13" r="3" fill="none" stroke="#fff" stroke-width="2"/><path stroke="#fff" stroke-width="2" d="M6 2h12"/></svg></div>

        <div class="tray">
            <svg class="tr-people" viewBox="0 0 16 16"><circle class="w1" cx="11" cy="4" r="2.500"/><circle class="w1" cx="5" cy="8" r="2.500"/><path class="w1" d="M1 15c0-3 2-4 4-4s4 1 4 4M9 9c1-1 2-1 3-1 2 0 3 1 3 4"/></svg>
            <svg class="tr-up" viewBox="0 0 14 8"><path class="w1" d="M1 7l6-6 6 6"/></svg>
            <svg class="tr-batt" viewBox="0 0 18 12"><path class="w1" d="M6 2h10v8H6M1 2v3h4V2M3 5v5h3M2 0v2M4 0v2"/></svg>
            <svg class="tr-wifi" viewBox="0 0 14 14"><path fill="none" stroke="#bbb" d="M1 7a9 9 0 0 1 12-5M3 10a6 6 0 0 1 9-4M6 12a3 3 0 0 1 6-3"/><circle cx="12" cy="12" r="1.300" fill="#fff"/></svg>
            <svg class="tr-vol" viewBox="0 0 16 14"><path class="w1" d="M1 5h3l4-4v12L4 9H1zM10 4c1 2 1 4 0 6"/><path fill="none" stroke="#999" d="M13 2c2 3 2 7 0 10"/></svg>
            <div class="tr-lang">ENG<br>INTL</div>
            <div class="tr-time">04:01<br>29/12/2023</div>
            <div class="tr-note">
                <svg viewBox="0 0 18 16"><path fill="#fff" d="M1 1h16v11H8l-3 3v-3H1z"/><path stroke="#222" d="M4 4h10M4 7h10M4 10h6"/></svg>
                <span class="tr-badge">2</span>
            </div>
            <div class="tr-end"></div>
        </div>
    </div>
</body>

</html>
```

FILE: styles.css
```css
* {
    box-sizing: border-box;
}

html,
body {
    height: 768px;
}

body {
    margin: 0;
    width: 1366px;
    overflow: hidden;
    display: flex;
    flex-direction: column;
    font-family: "Noto Sans", "Open Sans", sans-serif;
    font-size: 11.400px;
    color: #323130;
    background: #fff;
}

svg {
    display: block;
    flex: none;
}

/* shared strokes */
.w1 { fill: none; stroke: #fff; stroke-width: 1; }
.d1 { fill: none; stroke: #8a8886; stroke-width: 1; }
.k1 { fill: none; stroke: #333; stroke-width: 1; }
.k2 { fill: none; stroke: #333; stroke-width: 1.400; }
.dk { fill: none; stroke: #444; stroke-width: 1; }
.dk2 { fill: #fff; stroke: #333; stroke-width: 1.300; }
.gy { fill: none; stroke: #777; stroke-width: 1; }
.dg { fill: none; stroke: #c0c0c0; stroke-width: 1; }
.bl { fill: none; stroke: #a7cff0; stroke-width: 1; }
.or { fill: #fdfaf5; stroke: #f5d7b0; stroke-width: 1.200; }
.orl { fill: #fff; stroke: #d9731a; stroke-width: 1.200; }
.tb { fill: #fff; stroke: #555; stroke-width: 1; }
.gr { fill: none; stroke: #2f9e55; stroke-width: 1.300; }
.grn { fill: none; stroke: #3a9a58; stroke-width: 1.400; }
.blu { fill: none; stroke: #1b7fc9; stroke-width: 1.300; }
.dots { fill: none; stroke: #333; stroke-width: 2; }
.hnd { fill: #1b7fc9; }

.ic10 { width: 10px; height: 10px; }
.ic12 { width: 12px; height: 12px; }
.ic14 { width: 14px; height: 14px; }
.ic16 { width: 16px; height: 16px; }
.ic18 { width: 18px; height: 18px; }
.ic20 { width: 20px; height: 18px; }
.ic28 { width: 28px; height: 28px; }
.ic32 { width: 32px; height: 32px; }

/* title bar */
.titlebar {
    height: 34px;
    flex: none;
    display: flex;
    align-items: center;
    background: #3b3a39;
    color: #fff;
    position: relative;
}

.tb-save { width: 16px; height: 16px; margin-left: 17px; }
.tb-undo { width: 16px; height: 16px; margin-left: 14px; }
.tb-redo { width: 16px; height: 16px; margin-left: 15px; }
.tb-name { margin-left: 8px; width: 46px; }
.tb-dot { width: 3px; height: 3px; border-radius: 50%; background: #fff; margin-left: 3px; }
.tb-saved { margin-left: 6px; width: 182px; white-space: nowrap; }
.tb-caret {
    width: 0;
    height: 0;
    margin: 0 0 4px 3px;
    border-left: 5px solid transparent;
    border-right: 5px solid transparent;
    border-top: 5px solid #fff;
}

.tb-search {
    position: absolute;
    left: 567px;
    top: 5px;
    width: 400px;
    height: 24px;
    display: flex;
    align-items: center;
    padding-left: 18px;
    gap: 11px;
    background: #d2d0ce;
    border-radius: 2px;
    color: #3d5a55;
    font-size: 13px;
}

.tb-sign { margin-left: auto; }
.tb-user { width: 20px; height: 20px; margin-left: 9px; }
.tb-min { width: 10px; height: 10px; margin-left: 26px; }
.tb-max { width: 10px; height: 10px; margin-left: 39px; }
.tb-close { width: 12px; height: 12px; margin: 0 15px 0 35px; }

/* ribbon tabs */
.tabs {
    height: 34px;
    flex: none;
    display: flex;
    align-items: center;
    padding-bottom: 2px;
    background: #fcfcfc;
    font-size: 13px;
    position: relative;
}

.tab { white-space: nowrap; }
.t-file { margin-left: 22px; width: 59px; }
.t-home { width: 38px; position: relative; font-weight: 500; color: #111; }
.t-home::after {
    content: "";
    position: absolute;
    left: 0;
    right: 0;
    bottom: -6px;
    height: 2px;
    background: #117865;
}
.t-insert { margin-left: 32px; width: 66px; }
.t-model { width: 90px; }
.t-view { width: 61px; }
.t-opt { width: 88px; }
.t-help { width: 40px; }

.share {
    position: absolute;
    left: 1276px;
    top: 4px;
    width: 84px;
    height: 24px;
    display: flex;
    align-items: center;
    justify-content: center;
    gap: 5px;
    border-radius: 3px;
    background: #117865;
    color: #fff;
    font-size: 12px;
}

/* ribbon */
.ribbon {
    height: 92px;
    flex: none;
    display: flex;
    background: #fcfcfc;
    box-shadow: 0 2px 3px rgba(0, 0, 0, 0.18);
    position: relative;
    z-index: 2;
}

.group {
    display: flex;
    flex-direction: column;
    padding-top: 8px;
    margin-top: 2px;
    border-right: 1px solid #dcdcdc;
    height: 88px;
}

.g-clip { width: 161px; padding-left: 10px; }
.g-data { width: 383px; padding-left: 6px; }
.g-query { width: 117px; padding-left: 10px; }
.g-insert { width: 148px; padding-left: 8px; }
.g-calc { width: 115px; padding-left: 7px; }
.g-sens { width: 74px; }
.g-share { width: 59px; }

.btns {
    display: flex;
}

.btn {
    display: flex;
    flex-direction: column;
    align-items: center;
    text-align: center;
    line-height: 16px;
    margin-top: -2px;
    white-space: nowrap;
}

.btn span {
    margin-top: 2px;
}

.w38 { width: 38px; }
.w40 { width: 40px; }
.w42 { width: 42px; }
.w44 { width: 44px; }
.w46 { width: 46px; }
.w48 { width: 48px; }
.w50 { width: 50px; }
.w52 { width: 52px; }
.w54 { width: 54px; }
.w55 { width: 55px; }
.w58 { width: 58px; }
.w73 { width: 73px; }
.w76 { width: 76px; }

.off { color: #c4c4c4; }

.chev {
    display: inline-block;
    width: 4px;
    height: 4px;
    margin: 0 0 3px 1px;
    border-right: 1px solid currentColor;
    border-bottom: 1px solid currentColor;
    transform: rotate(45deg);
}

.group-label {
    margin-top: auto;
    height: 12px;
    margin-bottom: -2px;
    text-align: center;
    font-size: 9.600px;
    line-height: 12px;
    color: #444;
}

.g-clip .group-label { margin-left: -10px; }
.g-data .group-label { margin-left: -6px; }
.g-query .group-label { margin-left: -10px; }
.g-insert .group-label { margin-left: -8px; }
.g-calc .group-label { margin-left: -7px; }

.clip-row {
    display: flex;
    color: #c4c4c4;
}

.paste {
    width: 36px;
    display: flex;
    flex-direction: column;
    align-items: center;
    margin-top: 2px;
    text-align: center;
}

.paste span {
    margin-top: -2px;
    line-height: 16px;
}

.clip-list {
    margin: -5px 0 0 9px;
    display: flex;
    flex-direction: column;
    gap: 6px;
}

.clip-item {
    height: 18px;
    display: flex;
    align-items: center;
    gap: 5px;
    white-space: nowrap;
}

.collapse {
    position: absolute;
    left: 1351px;
    top: 78px;
    width: 10px;
    height: 10px;
}

/* main */
.main {
    height: 543px;
    flex: none;
    display: flex;
}

.rail {
    width: 41px;
    flex: none;
    background: #f3f2f1;
    border-right: 1px solid #e1dfdd;
}

.rail-item {
    height: 40px;
    padding-left: 1px;
    display: flex;
    align-items: center;
    justify-content: center;
}

.rail-item.active {
    box-shadow: inset 3px 0 0 #117865;
}

.center {
    width: 964px;
    flex: none;
    display: flex;
    flex-direction: column;
}

.work {
    height: 508px;
    display: flex;
}

.canvas {
    width: 762px;
    flex: none;
    padding-top: 12px;
    background: #fff;
}

.kpi-row {
    display: flex;
    height: 55px;
    margin-left: 57px;
}

.kpi {
    text-align: center;
}

.kpi-a { width: 138px; }
.kpi-b { width: 144px; }

.kpi-num {
    margin-top: 9px;
    font-size: 17px;
    line-height: 24px;
    letter-spacing: 1px;
    color: #111;
}

.kpi-lbl {
    margin-top: 1px;
    font-size: 9px;
    line-height: 13px;
    color: #9a9a9a;
}

.banner {
    width: 370px;
    display: flex;
    align-items: center;
    padding-left: 70px;
    background: #000;
    border: 1px solid #24344f;
    border-top-right-radius: 14px;
    color: #fff;
    font-size: 22px;
    letter-spacing: -1.100px;
}

.chart-grid {
    display: grid;
    grid-template-columns: 212px 249px 192px;
    row-gap: 21px;
    margin: 32px 0 0 58px;
}

.card {
    height: 134px;
    background: #fff;
    box-shadow: 5px 5px 5px #a9abb8;
}

.card-a { width: 187px; }
.card-b { width: 222px; }
.card-c { width: 192px; }

.chart {
    width: 100%;
    height: 100%;
    font-family: "Noto Sans", sans-serif;
}

.c-title { font-size: 6.600px; fill: #c4c4c4; }
.c-grid { fill: none; stroke: #f1f1f1; stroke-width: 1; }
.c-ax { font-size: 6px; fill: #aaa; text-anchor: middle; }
.c-lb { font-size: 5.800px; fill: #8f8f8f; text-anchor: middle; }
.c-lr { font-size: 5.800px; fill: #8f8f8f; text-anchor: end; }
.c-lead { fill: none; stroke: #bbb; stroke-width: 0.700; }

.dotline {
    margin: 41px 1px 0 2px;
    border-top: 2px dotted #555;
}

/* filters */
.filters {
    width: 202px;
    flex: none;
    background: #fff;
    border-left: 1px solid #c8c6c4;
    border-right: 1px solid #e1dfdd;
}

.pane-head {
    height: 45px;
    display: flex;
    align-items: center;
    padding: 0 0 7px 11px;
}

.pane-title {
    font-size: 15px;
    font-weight: 500;
    color: #252423;
}

.f-icon { width: 18px; height: 18px; margin-right: 8px; }
.f-eye { width: 13px; height: 10px; margin-left: auto; }
.chevs { width: 14px; height: 14px; }
.pane-head .chevs { margin: 0 9px 0 15px; }

.f-search {
    height: 31px;
    margin: 0 12px 0 8px;
    display: flex;
    align-items: center;
    gap: 12px;
    padding-left: 11px;
    border: 1px solid #c8c6c4;
    border-radius: 2px;
}

.f-sec {
    padding: 16px 8px 0 8px;
    border-top: 1px solid #c8c6c4;
    margin-top: 4px;
}

.f-sec2 {
    border-top: 0;
    margin-top: 27px;
    padding-top: 0;
}

.f-sec-head {
    height: 18px;
    display: flex;
    justify-content: space-between;
    line-height: 18px;
    padding-right: 4px;
}

.more {
    font-weight: 400;
    color: #605e5c;
    letter-spacing: 1px;
    line-height: 12px;
}

.f-box {
    height: 45px;
    margin-top: 7px;
    display: flex;
    align-items: center;
    justify-content: center;
    border: 1px solid #c8c6c4;
    border-radius: 2px;
}

/* page tabs */
.pagebar {
    height: 35px;
    flex: none;
    display: flex;
    background: #f3f2f1;
    position: relative;
}

.view-btn {
    width: 24px;
    height: 31px;
    margin-left: 10px;
    padding-top: 8px;
    display: flex;
    justify-content: center;
}

.view-btn + .view-btn {
    margin-left: 20px;
}

.view-btn + .view-btn svg {
    width: 14px;
    height: 22px;
    margin-top: -3px;
}

.view-btn.on {
    border-bottom: 3px solid #117865;
    height: 31px;
}

.arrows {
    width: 49px;
    display: flex;
    align-items: center;
    gap: 17px;
    padding-left: 12px;
}

.arr-l,
.arr-r {
    width: 0;
    height: 0;
    border-top: 4px solid transparent;
    border-bottom: 4px solid transparent;
}

.arr-l { border-right: 5px solid #c8c6c4; }
.arr-r { border-left: 5px solid #c8c6c4; }

.page-tab {
    width: 76.750px;
    display: flex;
    align-items: center;
    justify-content: center;
    background: #fff;
    border-left: 1px solid #b3b0ad;
    position: relative;
}

.page-tab.current {
    box-shadow: inset 0 -4px 0 #117865;
    border-right: 1px solid #c8c6c4;
}

.tab-x {
    position: absolute;
    right: 4px;
    top: 2px;
    font-size: 11px;
    line-height: 14px;
}

.page-add {
    width: 39px;
    height: 32px;
    margin-top: 2px;
    display: flex;
    align-items: center;
    justify-content: center;
    background: #117865;
    color: #fff;
    font-size: 22px;
    font-weight: 700;
}

/* visualizations */
.viz {
    width: 181px;
    flex: none;
    background: #f3f2f1;
    border-left: 1px solid #e1dfdd;
    border-right: 1px solid #e1dfdd;
    display: flex;
    flex-direction: column;
}

.viz-head {
    height: 38px;
    display: flex;
    align-items: center;
    justify-content: space-between;
    padding: 0 8px 0 7px;
}

.viz-sub {
    padding-left: 7px;
    font-weight: 500;
    font-size: 11.500px;
    line-height: 16px;
    color: #252423;
}

.viz-modes {
    display: flex;
    align-items: center;
    padding-left: 7px;
    margin-top: 3px;
}

.mode-on {
    width: 32px;
    height: 32px;
    padding: 2px;
    background: #d2d0ce;
    border-radius: 2px;
}

.mode-off {
    width: 26px;
    height: 28px;
    margin-left: 37px;
}

.viz-line {
    height: 1px;
    margin-top: 12px;
    background: #a8a6a4;
    position: relative;
}

.viz-tip {
    position: absolute;
    left: 18px;
    top: -6px;
    width: 11px;
    height: 11px;
    background: #f3f2f1;
    border-left: 1px solid #a8a6a4;
    border-top: 1px solid #a8a6a4;
    transform: rotate(45deg);
}

.viz-grid {
    display: grid;
    grid-template-columns: repeat(6, 28px);
    grid-auto-rows: 28px;
    margin: 6px 0 0 5px;
    justify-items: center;
    align-items: center;
}

.viz-grid svg {
    width: 20px;
    height: 20px;
    overflow: visible;
}

.b { fill: #5aa5e4; stroke: #1b7fc9; stroke-width: 1; }
.bf { fill: #77a8de; stroke: #1b7fc9; stroke-width: 1; }
.g { fill: #bbb; stroke: #777; stroke-width: 1; }
.w0 { fill: #fff; stroke: #333; stroke-width: 1; }
.bl2 { fill: none; stroke: #1b7fc9; stroke-width: 1; }

.num { font-size: 8px; fill: #2b88d8; text-anchor: middle; font-family: "Noto Sans", sans-serif; }
.big-r { font-size: 17px; font-weight: 700; fill: #2d7fb8; text-anchor: middle; font-family: "Noto Sans", sans-serif; }
.big-py { font-size: 17px; font-weight: 700; fill: #2d7fb8; font-family: "Noto Sans", sans-serif; }
.xl { font-size: 10px; font-weight: 700; fill: #fff; text-anchor: middle; font-family: "Noto Sans", sans-serif; }
.tb-a { font-size: 20px; fill: #1b7fc9; text-anchor: middle; font-family: "Noto Sans", sans-serif; }

.viz-more {
    height: 14px;
    margin-top: 4px;
    padding-left: 12px;
    line-height: 10px;
    font-size: 15px;
    letter-spacing: 1.500px;
    color: #333;
}

.viz-values {
    margin-top: 14px;
    padding-top: 8px;
    border-top: 2px solid #e1dfdd;
    flex: 1;
}

.v-label {
    padding-left: 11px;
    line-height: 16px;
    height: 21px;
}

.d-box {
    margin: 0 6px 0 3px;
    display: flex;
    align-items: center;
    background: #fff;
    border: 1px dashed #c8c6c4;
    border-radius: 2px;
}

.d-a { height: 27px; padding-left: 10px; }
.d-b { height: 26px; padding-left: 8px; margin-top: 4px; white-space: nowrap; font-size: 11.500px; }

.v-drill {
    margin-top: 10px;
    padding-left: 11px;
    height: 21px;
    line-height: 20px;
    font-weight: 500;
    color: #484644;
}

.t-row {
    height: 27px;
    display: flex;
    align-items: center;
    justify-content: space-between;
    padding: 0 22px 0 11px;
    margin-top: 0;
}

.tgl {
    width: 32px;
    height: 16px;
    display: flex;
    align-items: center;
    border-radius: 8px;
    font-size: 9.500px;
}

.tgl i {
    width: 8px;
    height: 8px;
    border-radius: 50%;
}

.tgl-off {
    padding-left: 4px;
    gap: 1px;
    border: 1px solid #605e5c;
    color: #605e5c;
}

.tgl-off i { background: #605e5c; }

.tgl-on {
    padding: 0 3px 0 4px;
    justify-content: space-between;
    background: #117865;
    color: #fff;
}

.tgl-on i { background: #fff; }

/* data pane */
.data {
    flex: 1;
    background: #f3f2f1;
}

.data-head {
    padding: 0 8px;
}

.d-search {
    height: 27px;
    margin: 7px 4px 0 4px;
    display: flex;
    align-items: center;
    gap: 7px;
    padding-left: 8px;
    border: 1px solid #8a8886;
    border-radius: 2px;
    color: #605e5c;
    font-size: 13px;
}

.tree {
    display: flex;
    align-items: center;
    height: 20px;
    margin-top: 11px;
    padding-left: 8px;
    color: #605e5c;
}

.tree-chev { width: 8px; height: 12px; margin-right: 9px; }
.tree .ic12 { margin-right: 6px; }

/* status bar */
.status {
    height: 24px;
    flex: none;
    display: flex;
    align-items: center;
    justify-content: space-between;
    padding: 0 19px 0 5px;
    background: #f3f2f1;
    border-top: 1px solid #e1dfdd;
    color: #605e5c;
    font-size: 11.500px;
}

.zoom {
    display: flex;
    align-items: center;
}

.z-sym {
    font-size: 14px;
    width: 14px;
}

.z-track {
    width: 100px;
    height: 1px;
    margin: 0 3px 0 -2px;
    background: #605e5c;
    position: relative;
}

.z-knob {
    position: absolute;
    left: 26px;
    top: -5px;
    width: 4px;
    height: 11px;
    background: #605e5c;
}

.z-mid {
    position: absolute;
    left: 50px;
    top: -2px;
    width: 1px;
    height: 5px;
    background: #605e5c;
}

.z-pct {
    margin: 0 15px 0 11px;
    font-size: 12px;
    color: #8a8886;
}

/* taskbar */
.taskbar {
    height: 41px;
    flex: none;
    display: flex;
    background: linear-gradient(90deg, #1d2a22 0, #1d2a22 900px, #2a1c18 1100px, #1e2420 1366px);
    color: #fff;
    position: relative;
}

.behind {
    position: absolute;
    left: 380px;
    top: 0;
    width: 928px;
    height: 11px;
    display: flex;
    gap: 22px;
    padding-left: 15px;
    background: #2b2b2b;
    color: #111;
    font-size: 9.500px;
    line-height: 10px;
}

.ti {
    width: 49px;
    height: 41px;
    flex: none;
    display: flex;
    align-items: center;
    justify-content: center;
    position: relative;
}

.ti svg {
    width: 24px;
    height: 24px;
}

.ti:nth-child(2) svg,
.ti:nth-child(3) svg,
.ti:nth-child(4) svg {
    width: 20px;
    height: 20px;
}

.ti:nth-child(8) svg {
    width: 24px;
    height: 30px;
}

.ti.run::after {
    content: "";
    position: absolute;
    left: 4px;
    right: 5px;
    bottom: 0;
    height: 2px;
    background: #f4b3a8;
}

.ti.active {
    background: rgba(255, 255, 255, 0.2);
}

.tray {
    margin-left: auto;
    display: flex;
    align-items: center;
    height: 41px;
    font-size: 12px;
    position: relative;
}

.tr-people { width: 16px; height: 16px; margin-right: 21px; }
.tr-up { width: 14px; height: 8px; margin-right: 8px; }
.tr-batt { width: 18px; height: 12px; margin-right: 9px; }
.tr-wifi { width: 14px; height: 14px; margin-right: 8px; }
.tr-vol { width: 16px; height: 14px; }

.tr-lang {
    width: 40px;
    margin-left: 2px;
    text-align: center;
    line-height: 18px;
}

.tr-time {
    width: 70px;
    margin-left: -2px;
    text-align: center;
    line-height: 18px;
}

.tr-note {
    width: 24px;
    height: 24px;
    margin-left: 8px;
    position: relative;
}

.tr-note svg {
    width: 17px;
    height: 15px;
    margin-top: 2px;
}

.tr-badge {
    position: absolute;
    right: -2px;
    bottom: 0;
    width: 15px;
    height: 15px;
    border-radius: 50%;
    border: 1px solid #ccc;
    background: #1d2a22;
    display: flex;
    align-items: center;
    justify-content: center;
    font-size: 10px;
    font-weight: 700;
}

.tr-end {
    width: 1px;
    height: 41px;
    margin: 0 4px 0 16px;
    background: #777;
}
```
